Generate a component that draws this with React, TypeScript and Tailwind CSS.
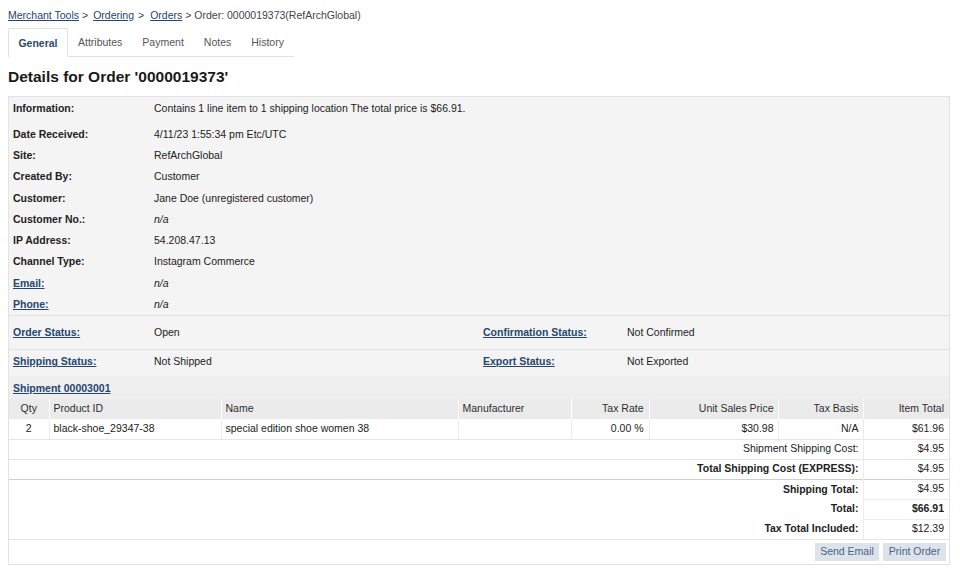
import React from "react";

const linkCls = "text-[#24466f] underline underline-offset-[1px]";

interface InfoRow {
  label: string;
  value: string;
  link?: boolean;
  italic?: boolean;
}

const infoRows: InfoRow[] = [
  { label: "Date Received:", value: "4/11/23 1:55:34 pm Etc/UTC" },
  { label: "Site:", value: "RefArchGlobal" },
  { label: "Created By:", value: "Customer" },
  { label: "Customer:", value: "Jane Doe (unregistered customer)" },
  { label: "Customer No.:", value: "n/a", italic: true },
  { label: "IP Address:", value: "54.208.47.13" },
  { label: "Channel Type:", value: "Instagram Commerce" },
  { label: "Email:", value: "n/a", link: true, italic: true },
  { label: "Phone:", value: "n/a", link: true, italic: true },
];

const tabs = ["General", "Attributes", "Payment", "Notes", "History"];

const App: React.FC = () => {
  return (
    <div className="min-h-[573px] bg-white px-2 font-['Liberation_Sans',Arial,sans-serif] text-[10.5px] text-[#222]">
      {/* breadcrumb */}
      <div className="flex h-[28px] items-center pt-[3px] text-[#444]">
        <a className={linkCls}>Merchant Tools</a>
        <span className="mx-[3px]">&gt;</span>
        <a className={linkCls + " ml-[2px]"}>Ordering</a>
        <span className="mx-[4px]">&gt;</span>
        <a className={linkCls + " ml-[2px]"}>Orders</a>
        <span className="ml-[3px]">&gt; Order: 0000019373(RefArchGlobal)</span>
      </div>

      {/* tabs */}
      <div className="flex h-[29px]">
        {tabs.map((t, i) =>
          i === 0 ? (
            <div
              key={t}
              className="flex w-[60px] items-center justify-center rounded-t-[2px] border-x border-t border-[#e2e2e2] pt-[2px] font-bold text-[#2c4a6c]"
            >
              {t}
            </div>
          ) : (
            <div
              key={t}
              className="flex items-center border-b border-[#e2e2e2] px-[10px] pt-[2px] text-[#555]"
            >
              {t}
            </div>
          )
        )}
      </div>

      <h1 className="flex h-[39px] items-center text-[15.5px] font-bold text-[#1a1a1a]">
        Details for Order '0000019373'
      </h1>

      <div className="w-[942px] border border-[#e3e3e3]">
        {/* info panel */}
        <div className="bg-[#f4f4f4]">
          <div className="flex h-[27px] items-start pt-[4px]">
            <div className="w-[145px] pl-[4px] font-bold">Information:</div>
            <div>Contains 1 line item to 1 shipping location The total price is $66.91.</div>
          </div>
          {infoRows.map((r) => (
            <div key={r.label} className="flex h-[21.25px] items-center">
              <div className={"w-[145px] pl-[4px] font-bold " + (r.link ? linkCls : "")}>
                {r.label}
              </div>
              <div className={r.italic ? "italic" : ""}>{r.value}</div>
            </div>
          ))}
          <div className="flex h-[34px] items-center border-t border-[#e2e2e2]">
            <div className={"w-[145px] pl-[4px] font-bold " + linkCls}>Order Status:</div>
            <div className="w-[329px]">Open</div>
            <div className={"w-[144px] font-bold " + linkCls}>Confirmation Status:</div>
            <div>Not Confirmed</div>
          </div>
          <div className="flex h-[27px] items-center border-t border-[#e2e2e2] pb-[2px]">
            <div className={"w-[145px] pl-[4px] font-bold " + linkCls}>Shipping Status:</div>
            <div className="w-[329px]">Not Shipped</div>
            <div className={"w-[144px] font-bold " + linkCls}>Export Status:</div>
            <div>Not Exported</div>
          </div>
        </div>

        {/* shipment */}
        <div className="flex h-[23px] items-center bg-[#efefef] pl-[4px] pt-[2px]">
          <a className={"font-bold " + linkCls}>Shipment 00003001</a>
        </div>

        <table className="w-full table-fixed border-collapse">
          <colgroup>
            <col className="w-[40px]" />
            <col className="w-[172px]" />
            <col className="w-[237px]" />
            <col className="w-[113px]" />
            <col className="w-[78px]" />
            <col className="w-[129px]" />
            <col className="w-[85px]" />
            <col className="w-[86px]" />
          </colgroup>
          <thead>
            <tr className="h-[20px] bg-[#ebebeb] text-[#2e2e2e]">
              <th className="border-r border-white text-center font-normal">Qty</th>
              <th className="border-r border-white pl-[4px] text-left font-normal">Product ID</th>
              <th className="border-r border-white pl-[4px] text-left font-normal">Name</th>
              <th className="border-r border-white pl-[4px] text-left font-normal">Manufacturer</th>
              <th className="border-r border-white pr-[5px] text-right font-normal">Tax Rate</th>
              <th className="border-r border-white pr-[4px] text-right font-normal">Unit Sales Price</th>
              <th className="border-r border-white pr-[4px] text-right font-normal">Tax Basis</th>
              <th className="pr-[5px] text-right font-normal">Item Total</th>
            </tr>
          </thead>
          <tbody>
            <tr className="h-[20px] border-b border-[#e6e6e6]">
              <td className="border-r border-[#ececec] text-center">2</td>
              <td className="border-r border-[#ececec] pl-[4px]">black-shoe_29347-38</td>
              <td className="border-r border-[#ececec] pl-[4px]">special edition shoe women 38</td>
              <td className="border-r border-[#ececec]"></td>
              <td className="border-r border-[#ececec] pr-[5px] text-right">0.00 %</td>
              <td className="border-r border-[#ececec] pr-[4px] text-right">$30.98</td>
              <td className="border-r border-[#ececec] pr-[4px] text-right">N/A</td>
              <td className="pr-[5px] text-right">$61.96</td>
            </tr>
            <tr className="h-[20px] border-b border-[#e6e6e6]">
              <td colSpan={7} className="border-r border-[#ececec] pr-[4px] text-right">
                Shipment Shipping Cost:
              </td>
              <td className="pr-[5px] text-right">$4.95</td>
            </tr>
            <tr className="h-[20px] border-b border-[#cfcfcf]">
              <td colSpan={7} className="border-r border-[#ececec] pr-[4px] text-right font-bold">
                Total Shipping Cost (EXPRESS):
              </td>
              <td className="pr-[5px] text-right">$4.95</td>
            </tr>
            <tr className="h-[20px]">
              <td colSpan={7} className="border-r border-[#ececec] pr-[4px] text-right font-bold">
                Shipping Total:
              </td>
              <td className="border-b border-[#ececec] pr-[5px] text-right">$4.95</td>
            </tr>
            <tr className="h-[20px]">
              <td colSpan={7} className="border-r border-[#ececec] pr-[4px] text-right font-bold">
                Total:
              </td>
              <td className="border-b border-[#ececec] pr-[5px] text-right font-bold">$66.91</td>
            </tr>
            <tr className="h-[20px] border-b border-[#e6e6e6]">
              <td colSpan={7} className="border-r border-[#ececec] pr-[4px] text-right font-bold">
                Tax Total Included:
              </td>
              <td className="pr-[5px] text-right">$12.39</td>
            </tr>
          </tbody>
        </table>

        <div className="flex h-[24px] items-center justify-end gap-[4px] pr-[3px]">
          <button className="h-[18px] w-[64px] bg-[#dde3ea] text-[10.5px] text-[#4a6283]">
            Send Email
          </button>
          <button className="h-[18px] w-[63px] bg-[#dde3ea] text-[10.5px] text-[#4a6283]">
            Print Order
          </button>
        </div>
      </div>
    </div>
  );
};

export default App;
